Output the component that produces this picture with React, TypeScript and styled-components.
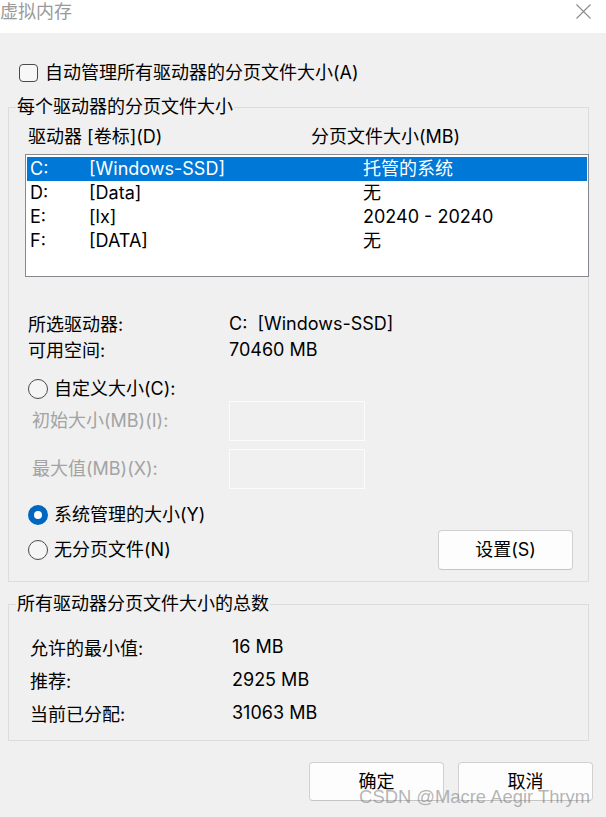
import React from "react";
import styled, { createGlobalStyle } from "styled-components";

const Global = createGlobalStyle`
  html, body { margin: 0; padding: 0; background: #f0f0f0; }
  body {
    font-family: Inter, "Noto Sans CJK SC", sans-serif;
    font-size: 18px;
    color: #000;
  }
  #root { width: 606px; height: 817px; }
`;

const Window = styled.div`
  position: relative;
  width: 606px;
  height: 817px;
  background: #f0f0f0;
  overflow: hidden;
  display: flex;
  flex-direction: column;
`;

const TitleBar = styled.div`
  flex-shrink: 0;
  height: 33px;
  background: #fff;
  display: flex;
  justify-content: space-between;
  align-items: flex-start;
  padding-right: 15px;
`;

const Title = styled.div`
  color: #9a9a9a;
  line-height: 24px;
`;

const CloseIcon = styled.svg`
  margin-top: 4px;
  display: block;
`;

const Body = styled.div`
  display: flex;
  flex-direction: column;
  padding: 28px 17px 0 8px;
`;

const CheckRow = styled.label`
  display: flex;
  align-items: center;
  gap: 7px;
  height: 24px;
  padding-left: 11px;
  line-height: 24px;
`;

const CheckBox = styled.span`
  width: 17px;
  height: 16px;
  border: 1px solid #4a4a4a;
  border-radius: 4px;
  background: #f7f7f7;
`;

const Group = styled.fieldset<{ $top: number }>`
  margin: ${(p) => p.$top}px 0 0;
  padding: 0;
  border: 1px solid #dcdcdc;
  min-width: 0;
`;

const Legend = styled.legend`
  margin-left: 7px;
  padding: 0 1px;
  line-height: 24px;
`;

const DriveSection = styled.div`
  display: flex;
  flex-direction: column;
  padding: 6px 0 11px 16px;
`;

const ColumnHeads = styled.div`
  display: grid;
  grid-template-columns: 283px 1fr;
  padding-left: 3px;
  height: 24px;
  line-height: 24px;
`;

const DriveList = styled.div`
  margin: 5px -1px 0 0;
  height: 123px;
  box-sizing: border-box;
  border: 1px solid #868a90;
  background: #fff;
  padding: 2px 1px;
`;

const DriveRow = styled.div<{ $selected?: boolean }>`
  display: grid;
  grid-template-columns: 59px 274px 1fr;
  padding-left: 3px;
  height: 24px;
  line-height: 24px;
  background: ${(p) => (p.$selected ? "#0078d7" : "transparent")};
  color: ${(p) => (p.$selected ? "#fff" : "#000")};
  white-space: pre;
`;

const InfoGrid = styled.div`
  display: grid;
  grid-template-columns: 201px 1fr;
  grid-auto-rows: 26px;
  align-items: center;
  margin-top: 33px;
  padding-left: 3px;
  white-space: pre;
`;

const RadioRow = styled.label<{ $top: number }>`
  display: flex;
  align-items: center;
  gap: 6px;
  margin-top: ${(p) => p.$top}px;
  padding-left: 3px;
  height: 24px;
  line-height: 24px;
`;

const Radio = styled.span<{ $on?: boolean }>`
  box-sizing: border-box;
  width: 20px;
  height: 20px;
  border-radius: 50%;
  border: ${(p) => (p.$on ? "6px solid #0067c0" : "1px solid #4a4a4a")};
  background: ${(p) => (p.$on ? "#fff" : "#f5f5f5")};
`;

const SizeRow = styled.div<{ $top: number }>`
  display: grid;
  grid-template-columns: 197px 136px;
  align-items: center;
  margin-top: ${(p) => p.$top}px;
  padding-left: 7px;
`;

const DimLabel = styled.span`
  color: #a3a3a3;
  line-height: 24px;
`;

const DimInput = styled.div`
  height: 40px;
  box-sizing: border-box;
  border: 1px solid #fbfbfb;
  background: #f0f0f0;
`;

const NoFileRow = styled.div`
  display: flex;
  align-items: center;
  justify-content: space-between;
  margin-top: 3px;
  padding-right: 15px;
  height: 40px;
`;

const InlineRadio = styled.label`
  display: flex;
  align-items: center;
  gap: 6px;
  padding-left: 3px;
  line-height: 24px;
`;

const Button = styled.button<{ $h: number }>`
  width: 135px;
  height: ${(p) => p.$h}px;
  box-sizing: border-box;
  border: 1px solid #d0d0d0;
  border-bottom-color: #c4c4c4;
  border-radius: 4px;
  background: #fdfdfd;
  font: inherit;
  color: #000;
  padding: 0;
  line-height: 24px;
`;

const TotalsGrid = styled.div`
  display: grid;
  grid-template-columns: 202px 1fr;
  grid-auto-rows: 33px;
  align-items: center;
  padding: 14px 0 11px 21px;
`;

const Footer = styled.div`
  display: flex;
  justify-content: flex-end;
  gap: 14px;
  margin: 21px -4px 0 0;
`;

const Watermark = styled.div`
  position: absolute;
  top: 785px;
  right: 16px;
  font-family: "Liberation Sans", Arial, sans-serif;
  font-size: 18.4px;
  line-height: 24px;
  color: rgba(110, 110, 110, 0.5);
  white-space: pre;
  pointer-events: none;
`;

const drives = [
  { letter: "C:", label: "[Windows-SSD]", size: "托管的系统", selected: true },
  { letter: "D:", label: "[Data]", size: "无" },
  { letter: "E:", label: "[lx]", size: "20240 - 20240" },
  { letter: "F:", label: "[DATA]", size: "无" },
];

const totals = [
  ["允许的最小值:", "16 MB"],
  ["推荐:", "2925 MB"],
  ["当前已分配:", "31063 MB"],
];

export default function App() {
  return (
    <Window>
      <Global />
      <TitleBar>
        <Title>虚拟内存</Title>
        <CloseIcon width="15" height="15" viewBox="0 0 15 15">
          <path d="M0.5 0.5 L14.5 14.5 M14.5 0.5 L0.5 14.5" stroke="#8a8a8a" strokeWidth="1.1" fill="none" />
        </CloseIcon>
      </TitleBar>

      <Body>
        <CheckRow>
          <CheckBox />
          自动管理所有驱动器的分页文件大小(A)
        </CheckRow>

        <Group $top={10}>
          <Legend>每个驱动器的分页文件大小</Legend>
          <DriveSection>
            <ColumnHeads>
              <span>驱动器 [卷标](D)</span>
              <span>分页文件大小(MB)</span>
            </ColumnHeads>
            <DriveList>
              {drives.map((d) => (
                <DriveRow key={d.letter} $selected={d.selected}>
                  <span>{d.letter}</span>
                  <span>{d.label}</span>
                  <span>{d.size}</span>
                </DriveRow>
              ))}
            </DriveList>

            <InfoGrid>
              <span>所选驱动器:</span>
              <span>C:  [Windows-SSD]</span>
              <span>可用空间:</span>
              <span>70460 MB</span>
            </InfoGrid>

            <RadioRow $top={15}>
              <Radio />
              自定义大小(C):
            </RadioRow>
            <SizeRow $top={0}>
              <DimLabel>初始大小(MB)(I):</DimLabel>
              <DimInput />
            </SizeRow>
            <SizeRow $top={8}>
              <DimLabel>最大值(MB)(X):</DimLabel>
              <DimInput />
            </SizeRow>

            <RadioRow $top={14}>
              <Radio $on />
              系统管理的大小(Y)
            </RadioRow>
            <NoFileRow>
              <InlineRadio>
                <Radio />
                无分页文件(N)
              </InlineRadio>
              <Button $h={40}>设置(S)</Button>
            </NoFileRow>
          </DriveSection>
        </Group>

        <Group $top={10}>
          <Legend>所有驱动器分页文件大小的总数</Legend>
          <TotalsGrid>
            {totals.map(([k, v]) => (
              <React.Fragment key={k}>
                <span>{k}</span>
                <span>{v}</span>
              </React.Fragment>
            ))}
          </TotalsGrid>
        </Group>

        <Footer>
          <Button $h={39}>确定</Button>
          <Button $h={39}>取消</Button>
        </Footer>
      </Body>

      <Watermark>CSDN @Macre Aegir Thrym</Watermark>
    </Window>
  );
}
